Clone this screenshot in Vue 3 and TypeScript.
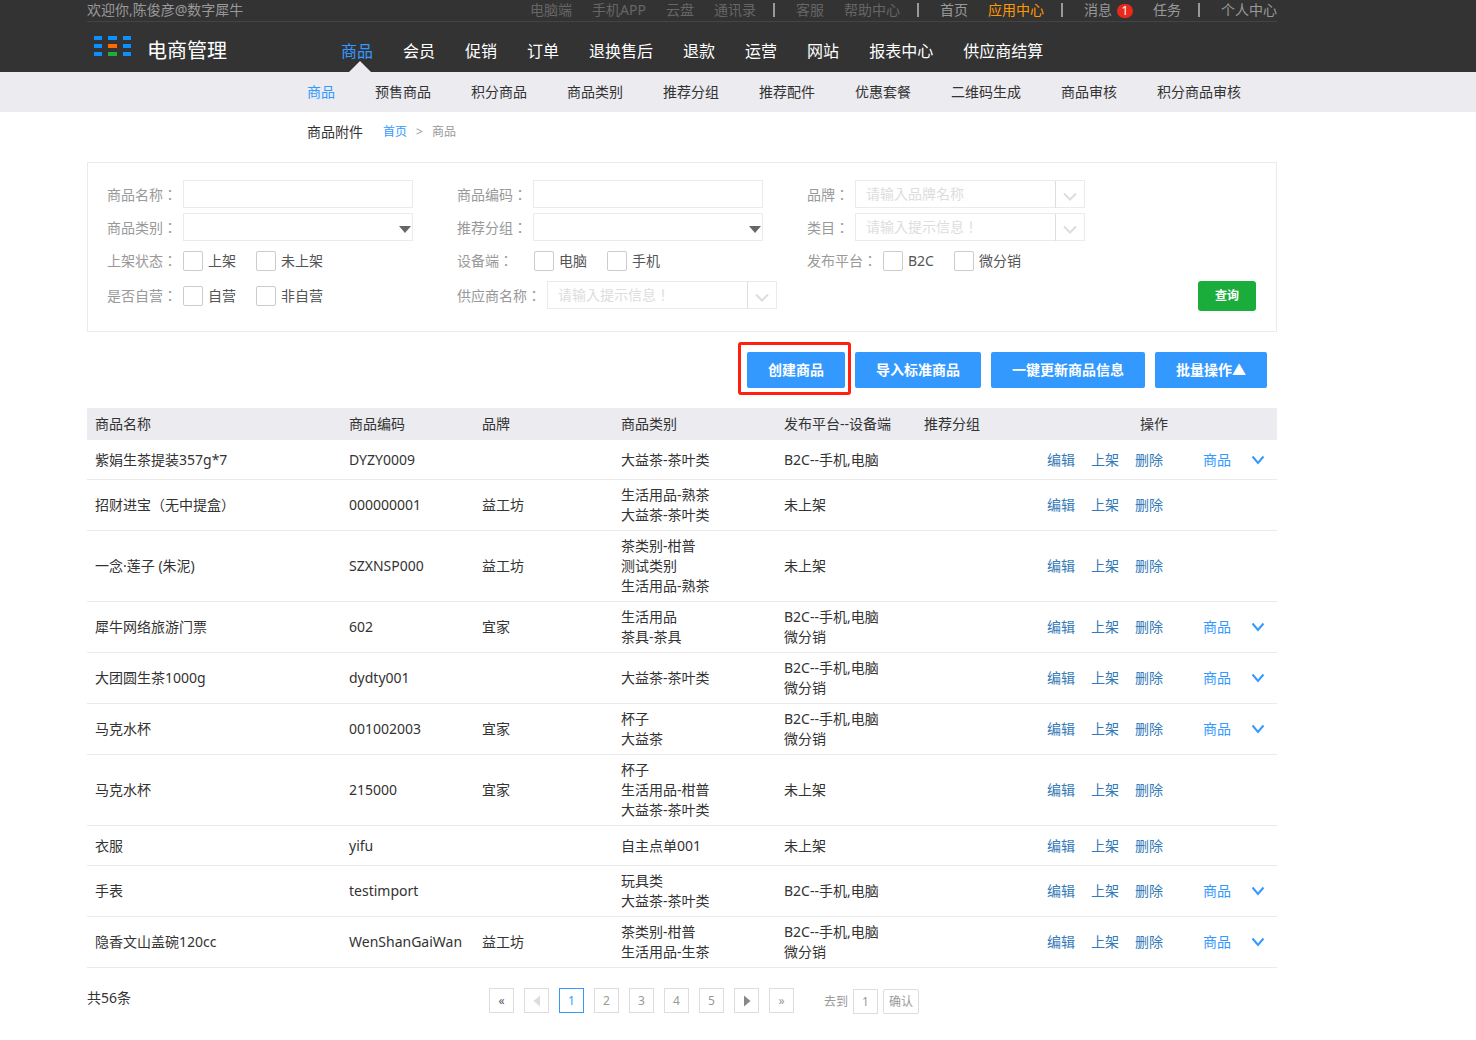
<script setup lang="ts">
import { ref } from 'vue'

interface Product {
  name: string
  code: string
  brand: string
  categories: string[]
  platforms: string[]
  expandable: boolean
}

interface TopLink {
  text: string
  tone?: 'dim' | 'hot'
  badge?: number
}

const topGroups: TopLink[][] = [
  [
    { text: '电脑端', tone: 'dim' },
    { text: '手机APP', tone: 'dim' },
    { text: '云盘', tone: 'dim' },
    { text: '通讯录', tone: 'dim' },
  ],
  [
    { text: '客服', tone: 'dim' },
    { text: '帮助中心', tone: 'dim' },
  ],
  [{ text: '首页' }, { text: '应用中心', tone: 'hot' }],
  [{ text: '消息', badge: 1 }, { text: '任务' }],
  [{ text: '个人中心' }],
]

const mainNav = ['商品', '会员', '促销', '订单', '退换售后', '退款', '运营', '网站', '报表中心', '供应商结算']
const subNav = ['商品', '预售商品', '积分商品', '商品类别', '推荐分组', '推荐配件', '优惠套餐', '二维码生成', '商品审核', '积分商品审核']

const logoColors = ['#0a90ff', '#0a90ff', '#0a90ff', '#0a90ff', '#ff6a00', '#0a90ff', '#0a90ff', '#22ac38', '#0a90ff']

const columns = ['商品名称', '商品编码', '品牌', '商品类别', '发布平台--设备端', '推荐分组', '操作']

const products: Product[] = [
  { name: '紫娟生茶提装357g*7', code: 'DYZY0009', brand: '', categories: ['大益茶-茶叶类'], platforms: ['B2C--手机,电脑'], expandable: true },
  { name: '招财进宝（无中提盒）', code: '000000001', brand: '益工坊', categories: ['生活用品-熟茶', '大益茶-茶叶类'], platforms: ['未上架'], expandable: false },
  { name: '一念·莲子 (朱泥)', code: 'SZXNSP000', brand: '益工坊', categories: ['茶类别-柑普', '测试类别', '生活用品-熟茶'], platforms: ['未上架'], expandable: false },
  { name: '犀牛网络旅游门票', code: '602', brand: '宜家', categories: ['生活用品', '茶具-茶具'], platforms: ['B2C--手机,电脑', '微分销'], expandable: true },
  { name: '大团圆生茶1000g', code: 'dydty001', brand: '', categories: ['大益茶-茶叶类'], platforms: ['B2C--手机,电脑', '微分销'], expandable: true },
  { name: '马克水杯', code: '001002003', brand: '宜家', categories: ['杯子', '大益茶'], platforms: ['B2C--手机,电脑', '微分销'], expandable: true },
  { name: '马克水杯', code: '215000', brand: '宜家', categories: ['杯子', '生活用品-柑普', '大益茶-茶叶类'], platforms: ['未上架'], expandable: false },
  { name: '衣服', code: 'yifu', brand: '', categories: ['自主点单001'], platforms: ['未上架'], expandable: false },
  { name: '手表', code: 'testimport', brand: '', categories: ['玩具类', '大益茶-茶叶类'], platforms: ['B2C--手机,电脑'], expandable: true },
  { name: '隐香文山盖碗120cc', code: 'WenShanGaiWan', brand: '益工坊', categories: ['茶类别-柑普', '生活用品-生茶'], platforms: ['B2C--手机,电脑', '微分销'], expandable: true },
]

const currentPage = ref(1)
const targetPage = ref('1')

function goToPage() {
  const page = Number(targetPage.value)
  if (page >= 1) currentPage.value = page
}
</script>

<template>
  <header class="header">
    <div class="wrap">
      <div class="topbar">
        <span class="welcome">欢迎你,陈俊彦@数字犀牛</span>
        <div class="top-links">
          <template v-for="(group, g) in topGroups" :key="g">
            <span v-if="g > 0" class="bar"></span>
            <a v-for="link in group" :key="link.text" href="#" class="top-link" :class="link.tone">
              {{ link.text }}<span v-if="link.badge" class="badge">{{ link.badge }}</span>
            </a>
          </template>
        </div>
      </div>
      <div class="main-row">
        <div class="brand">
          <svg class="logo" width="38" height="21" viewBox="0 0 38 21" aria-hidden="true">
            <rect
              v-for="(color, i) in logoColors"
              :key="i"
              :x="i % 3 === 2 ? 29 : (i % 3) * 14"
              :y="Math.floor(i / 3) * 8"
              :width="i % 3 === 1 ? 9 : 8"
              height="4"
              :fill="color"
            />
          </svg>
          <span class="brand-name">电商管理</span>
        </div>
        <nav class="main-nav">
          <a v-for="(item, i) in mainNav" :key="item" href="#" :class="{ active: i === 0 }">{{ item }}</a>
        </nav>
      </div>
    </div>
  </header>

  <div class="subnav">
    <nav class="wrap subnav-links">
      <a v-for="(item, i) in subNav" :key="item" href="#" :class="{ active: i === 0 }">{{ item }}</a>
    </nav>
  </div>

  <main class="wrap">
    <div class="crumbs">
      <h1>商品附件</h1>
      <a href="#">首页</a>
      <span class="sep">&gt;</span>
      <span>商品</span>
    </div>

    <form class="filters" @submit.prevent>
      <div class="field">
        <label for="f-name">商品名称<i>：</i></label>
        <input id="f-name" class="box" type="text" />
      </div>
      <div class="field">
        <label for="f-code">商品编码<i>：</i></label>
        <input id="f-code" class="box" type="text" />
      </div>
      <div class="field">
        <label for="f-brand">品牌<i>：</i></label>
        <div class="combo">
          <input id="f-brand" type="text" placeholder="请输入品牌名称" />
          <button type="button" aria-label="展开品牌">
            <svg width="16" height="10" viewBox="0 0 16 10"><path d="M2 1.5 8 7.5 14 1.5" /></svg>
          </button>
        </div>
      </div>

      <div class="field">
        <label for="f-category">商品类别<i>：</i></label>
        <div class="select"><select id="f-category" class="box"><option></option></select></div>
      </div>
      <div class="field">
        <label for="f-group">推荐分组<i>：</i></label>
        <div class="select"><select id="f-group" class="box"><option></option></select></div>
      </div>
      <div class="field">
        <label for="f-class">类目<i>：</i></label>
        <div class="combo">
          <input id="f-class" type="text" placeholder="请输入提示信息！" />
          <button type="button" aria-label="展开类目">
            <svg width="16" height="10" viewBox="0 0 16 10"><path d="M2 1.5 8 7.5 14 1.5" /></svg>
          </button>
        </div>
      </div>

      <div class="field tall" role="group" aria-label="上架状态">
        <span class="label">上架状态<i>：</i></span>
        <label class="check"><input type="checkbox" />上架</label>
        <label class="check"><input type="checkbox" />未上架</label>
      </div>
      <div class="field tall" role="group" aria-label="设备端">
        <span class="label wide">设备端<i>：</i></span>
        <label class="check"><input type="checkbox" />电脑</label>
        <label class="check"><input type="checkbox" />手机</label>
      </div>
      <div class="field tall" role="group" aria-label="发布平台">
        <span class="label">发布平台<i>：</i></span>
        <label class="check"><input type="checkbox" />B2C</label>
        <label class="check"><input type="checkbox" />微分销</label>
      </div>

      <div class="field tall" role="group" aria-label="是否自营">
        <span class="label">是否自营<i>：</i></span>
        <label class="check"><input type="checkbox" />自营</label>
        <label class="check"><input type="checkbox" />非自营</label>
      </div>
      <div class="field">
        <label for="f-supplier">供应商名称<i>：</i></label>
        <div class="combo">
          <input id="f-supplier" type="text" placeholder="请输入提示信息！" />
          <button type="button" aria-label="展开供应商">
            <svg width="16" height="10" viewBox="0 0 16 10"><path d="M2 1.5 8 7.5 14 1.5" /></svg>
          </button>
        </div>
      </div>
      <div class="field tall submit">
        <button type="submit" class="search">查询</button>
      </div>
    </form>

    <div class="actions">
      <button type="button" class="marked">创建商品</button>
      <button type="button">导入标准商品</button>
      <button type="button">一键更新商品信息</button>
      <button type="button">批量操作▲</button>
    </div>

    <table class="products">
      <colgroup>
        <col class="c-name" /><col class="c-code" /><col class="c-brand" /><col class="c-cat" />
        <col class="c-plat" /><col class="c-group" /><col class="c-ops" />
      </colgroup>
      <thead>
        <tr>
          <th v-for="col in columns" :key="col">{{ col }}</th>
        </tr>
      </thead>
      <tbody>
        <tr v-for="(p, i) in products" :key="i">
          <td>{{ p.name }}</td>
          <td>{{ p.code }}</td>
          <td>{{ p.brand }}</td>
          <td><div v-for="c in p.categories" :key="c">{{ c }}</div></td>
          <td><div v-for="f in p.platforms" :key="f">{{ f }}</div></td>
          <td></td>
          <td>
            <div class="ops">
              <a href="#">编辑</a>
              <a href="#">上架</a>
              <a href="#">删除</a>
              <button v-if="p.expandable" type="button" class="expand">
                商品
                <svg width="14" height="10" viewBox="0 0 14 10" aria-hidden="true"><path d="M1.5 1.5 7 8 12.5 1.5" /></svg>
              </button>
            </div>
          </td>
        </tr>
      </tbody>
    </table>

    <footer class="footer">
      <span class="total">共56条</span>
      <div class="pager">
        <button type="button" class="first" aria-label="首页">«</button>
        <button type="button" class="prev" aria-label="上一页">
          <svg width="8" height="12" viewBox="0 0 8 12"><path d="M7 0.5V11.5L0.5 6Z" /></svg>
        </button>
        <button
          v-for="n in 5"
          :key="n"
          type="button"
          :class="{ current: n === currentPage }"
          @click="currentPage = n"
        >{{ n }}</button>
        <button type="button" class="next" aria-label="下一页">
          <svg width="8" height="12" viewBox="0 0 8 12"><path d="M1 0.5V11.5L7.5 6Z" /></svg>
        </button>
        <button type="button" aria-label="末页">»</button>
      </div>
      <div class="jump">
        <label for="jump-page">去到</label>
        <input id="jump-page" v-model="targetPage" type="text" />
        <button type="button" @click="goToPage">确认</button>
      </div>
    </footer>
  </main>
</template>

<style>
body {
  margin: 0;
  background: #fff;
  color: #333;
  font: 14px/20px "Noto Sans", "Noto Sans CJK SC", sans-serif;
}
</style>

<style scoped>
* {
  box-sizing: border-box;
}
a {
  color: inherit;
  text-decoration: none;
}
button,
input,
select {
  margin: 0;
  padding: 0;
  font: inherit;
  color: inherit;
}
button {
  cursor: pointer;
}
.wrap {
  max-width: 1190px;
  margin-left: 87px;
}

/* header */
.header {
  background: #333;
}
.topbar {
  display: flex;
  justify-content: space-between;
  height: 22px;
  border-bottom: 1px solid #444;
  color: #999;
}
.top-links {
  display: flex;
}
.top-link {
  display: flex;
  align-items: center;
  height: 20px;
  margin-left: 20px;
}
.top-link.dim {
  color: #666;
}
.top-link.hot {
  color: #ff9800;
}
.bar {
  width: 2px;
  height: 14px;
  margin: 3px 1px 0 17px;
  background: #999;
}
.badge {
  width: 16px;
  height: 14px;
  margin: 2px 0 0 5px;
  border-radius: 7px;
  background: #e8291c;
  color: #fff;
  font-size: 12px;
  line-height: 14px;
  text-align: center;
}
.main-row {
  display: flex;
  height: 50px;
}
.brand {
  display: flex;
  width: 254px;
  padding-left: 7px;
}
.logo {
  margin-top: 14px;
}
.brand-name {
  margin: 17px 0 0 15px;
  color: #fff;
  font-size: 20px;
  line-height: 24px;
}
.main-nav {
  display: flex;
  gap: 30px;
  color: #fff;
  font-size: 16px;
  line-height: 24px;
}
.main-nav a {
  position: relative;
  padding-top: 17px;
  white-space: nowrap;
}
.main-nav .active {
  color: #39f;
}
.main-nav .active::after {
  content: "";
  position: absolute;
  bottom: 0;
  left: 8px;
  border: 11px solid transparent;
  border-top: 0;
  border-bottom-color: #ebebf0;
}
.subnav {
  background: #ebebf0;
}
.subnav-links {
  display: flex;
  gap: 40px;
  padding-left: 220px;
  line-height: 40px;
  white-space: nowrap;
}
.subnav-links .active {
  color: #39f;
}

/* breadcrumb */
.crumbs {
  display: flex;
  height: 50px;
  padding: 10px 0 0 220px;
  color: #999;
  font-size: 12px;
}
.crumbs h1 {
  margin: 0 20px 0 0;
  color: #333;
  font-size: 14px;
  font-weight: 400;
}
.crumbs a {
  color: #39f;
}
.crumbs .sep {
  width: 25px;
  text-align: center;
}

/* filter panel */
.filters {
  display: grid;
  grid-template-columns: 350px 350px 1fr;
  gap: 5px 0;
  padding: 17px 20px 20px 19px;
  border: 1px solid #ebebeb;
  color: #999;
}
.field {
  display: flex;
  align-items: flex-start;
  height: 28px;
  line-height: 30px;
}
.field i {
  font-family: "Noto Sans CJK TC", sans-serif;
  font-style: normal;
  line-height: 20px;
}
.field > label:first-child,
.label {
  margin-right: 6px;
  white-space: nowrap;
}
.label.wide {
  width: 71px;
}
.field.tall {
  align-items: center;
  height: 30px;
}
.box,
.combo {
  width: 230px;
  height: 28px;
  border: 1px solid #ebebeb;
  border-radius: 0;
  background: #fff;
  color: #666;
}
.box {
  display: block;
  padding: 0 10px;
}
.select {
  position: relative;
}
.select .box {
  appearance: none;
}
.select::after {
  content: "";
  position: absolute;
  top: 13px;
  right: 2px;
  border: 6px solid transparent;
  border-top: 7px solid #666;
  border-bottom: 0;
  pointer-events: none;
}
.combo {
  display: flex;
}
.combo input {
  flex: 1;
  min-width: 0;
  padding-left: 10px;
  border: 0;
  background: none;
}
.combo input::placeholder {
  color: #ddd;
  opacity: 1;
  font-family: "Noto Sans", "Noto Sans CJK TC", sans-serif;
}
.combo button {
  display: flex;
  align-items: center;
  justify-content: center;
  width: 29px;
  height: 27px;
  padding-top: 5px;
  border: 0;
  border-left: 1px solid #ddd;
  background: none;
}
.combo path {
  fill: none;
  stroke: #ddd;
  stroke-width: 2;
}
.check {
  display: flex;
  align-items: center;
  gap: 5px;
  margin-right: 20px;
  color: #555;
}
.check input {
  appearance: none;
  width: 20px;
  height: 20px;
  border: 1px solid #ccc;
  border-radius: 2px;
  background: #fff;
}
.check input:checked {
  background: #39f;
}
.submit {
  justify-content: flex-end;
}
.search {
  width: 58px;
  height: 30px;
  border: 0;
  border-radius: 3px;
  background: #1aad3c;
  color: #fff;
  font-size: 12px;
  font-weight: 700;
}

/* actions */
.actions {
  display: flex;
  justify-content: flex-end;
  gap: 10px;
  padding: 20px 10px;
}
.actions button {
  position: relative;
  height: 36px;
  padding: 0 21px;
  border: 0;
  border-radius: 2px;
  background: #39f;
  color: #fff;
  font-weight: 700;
}
.actions .marked::after {
  content: "";
  position: absolute;
  inset: -10px -6px -7px -9px;
  border: 3px solid #ff2010;
  border-radius: 3px;
}

/* product table */
.products {
  width: 100%;
  border-collapse: separate;
  border-spacing: 0;
  table-layout: fixed;
}
.c-name { width: 254px; }
.c-code { width: 133px; }
.c-brand { width: 139px; }
.c-cat { width: 163px; }
.c-plat { width: 140px; }
.c-group { width: 115px; }
.products th {
  height: 32px;
  padding: 0 8px;
  background: #ebebf0;
  font-weight: 400;
  text-align: left;
}
.products th:last-child {
  text-align: center;
}
.products td {
  height: 40px;
  padding: 5px 8px;
  border-bottom: 1px solid #ebebeb;
  white-space: nowrap;
}
.ops {
  display: flex;
  gap: 16px;
  padding-left: 8px;
  color: #337ab7;
}
.expand {
  display: flex;
  align-items: center;
  gap: 20px;
  margin-left: 24px;
  border: 0;
  background: none;
  color: #39f;
}
.expand path {
  fill: none;
  stroke: #39f;
  stroke-width: 2;
}

/* pagination */
.footer {
  display: flex;
  padding-top: 20px;
  color: #999;
  font-size: 12px;
}
.total {
  width: 402px;
  color: #333;
  font-size: 14px;
}
.pager {
  display: flex;
  gap: 10px;
}
.pager button,
.jump input {
  display: flex;
  align-items: center;
  justify-content: center;
  width: 25px;
  height: 25px;
  border: 1px solid #ddd;
  background: #fff;
  text-align: center;
}
.pager .first {
  color: #555;
}
.pager .current {
  border-color: #39f;
  color: #39f;
}
.pager path {
  fill: #888;
}
.pager .prev path {
  fill: #ddd;
}
.jump {
  display: flex;
  align-items: center;
  gap: 5px;
  margin: 1px 0 0 30px;
}
.jump button {
  width: 36px;
  height: 25px;
  border: 1px solid #ddd;
  border-radius: 2px;
  background: #fff;
}
</style>
